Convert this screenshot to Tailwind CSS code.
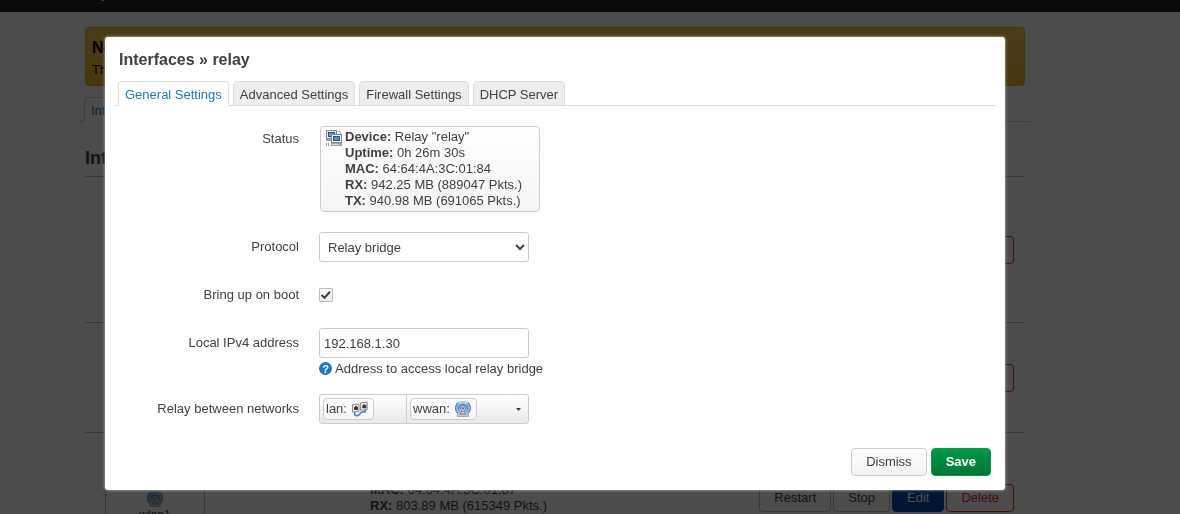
<!DOCTYPE html>
<html lang="en">

<head>
  <meta charset="UTF-8" />
  <meta name="viewport" content="width=device-width, initial-scale=1.0" />
  <title>OpenWrt - Interfaces - LuCI</title>
  <script src="https://cdn.jsdelivr.net/npm/@tailwindcss/browser@4"></script>
</head>

<body class="h-screen overflow-hidden bg-white font-['Liberation_Sans',Arial,sans-serif] text-[13px] leading-4 text-[#404040]">

  <!-- Shared icons -->
  <svg class="hidden" aria-hidden="true">
    <symbol id="icon-wifi" viewBox="0 0 16 16">
      <circle cx="8" cy="7" r="7.500" fill="#b4cff0" />
      <g fill="none" stroke="#4a83c8" stroke-width="1.2">
        <path d="M3.400 12.600a7 7 0 0 1 0-11.200M12.600 12.600a7 7 0 0 0 0-11.200" />
        <path d="M4.600 10.600a5 5 0 0 1 0-7.200M11.400 10.600a5 5 0 0 0 0-7.200" />
        <path d="M5.800 8.400a3 3 0 1 1 4.400 0" />
      </g>
      <path d="M8 6L5 14h6z" fill="#e8eef5" stroke="#6d7680" stroke-width=".9" />
      <path d="M6.500 10.500h3M6 12.300h4" stroke="#6d7680" stroke-width=".8" />
      <circle cx="8" cy="5.800" r="1.300" fill="#fff" stroke="#556" stroke-width=".8" />
      <path d="M2.500 13.800h11v1.700h-11z" fill="#ddd" stroke="#8a8a8a" stroke-width=".7" />
    </symbol>
  </svg>

  <!-- Page -->
  <header class="flex h-3 items-end bg-[#222] pr-[70px]">
    <div class="mx-auto h-full w-full max-w-[940px] overflow-hidden">
      <a href="#" class="-mt-5 block text-[20px] leading-5 text-white">OpenWrt</a>
    </div>
  </header>

  <main class="pt-[15px] pr-[70px]">
    <div class="mx-auto max-w-[940px]">
      <div class="h-[59px] rounded border border-[#e0b000] bg-linear-to-b from-[#f6cd50] to-[#eab72d] px-[6px] pt-[9px] text-black">
        <h4 class="text-base leading-[22px] font-bold">No password set!</h4>
        <p class="leading-[22px]">There is no password set on this router. Please configure a root password to protect the web interface.</p>
      </div>

      <ul class="-mx-[5px] mt-[11px] flex gap-1 border-b border-[#ccc] pl-1">
        <li class="-mb-px rounded-t border border-[#ccc] border-b-white bg-white px-[6px] pt-[5px] pb-[2px]"><a href="#" class="text-[#1976d2]">Interfaces</a></li>
        <li class="-mb-px rounded-t border border-[#ccc] bg-[#eee] px-[6px] pt-[5px] pb-[2px]"><a href="#">Global network options</a></li>
      </ul>

      <h3 class="mt-[26px] text-lg leading-5 font-bold">Interfaces</h3>

      <div class="mt-2 border-t border-[#bbb]">
        <div class="flex h-[146px] items-center justify-end border-b border-[#bbb] pr-[11px]">
          <button class="h-7 rounded border border-[#e5320a] px-[14px] text-[#e5320a]">Delete</button>
        </div>
        <div class="flex h-[110px] items-center justify-end border-b border-[#bbb] pr-[11px]">
          <button class="h-7 rounded border border-[#e5320a] px-[14px] text-[#e5320a]">Delete</button>
        </div>
        <div class="flex h-[130px] items-center border-b border-[#bbb] pr-[11px] pl-5">
          <div class="w-[100px] border border-[#bbb] pb-1 text-center">
            <div class="border-b border-[#bbb] py-px font-bold">wwan</div>
            <svg class="mx-auto mt-1 size-4"><use href="#icon-wifi" /></svg>
            <small class="text-xs">wlan1</small>
          </div>
          <div class="ml-[165px]">
            <div><strong>Protocol:</strong> DHCP client</div>
            <div><strong>Uptime:</strong> 0h 26m 32s</div>
            <div><strong>MAC:</strong> 64:64:4A:3C:01:87</div>
            <div><strong>RX:</strong> 803.89 MB (615349 Pkts.)</div>
            <div><strong>TX:</strong> 137.91 MB (273698 Pkts.)</div>
            <div><strong>IPv4:</strong> 192.168.1.30/24</div>
          </div>
          <div class="ml-auto flex gap-[2px]">
            <button class="h-7 rounded border border-[#bbb] px-[14px]">Restart</button>
            <button class="h-7 rounded border border-[#bbb] px-[14px]">Stop</button>
            <button class="h-7 rounded border border-[#0050b8] bg-linear-to-b from-[#0050b8] to-[#0040a0] px-[14px] text-white">Edit</button>
            <button class="h-7 rounded border border-[#e5320a] px-[14px] text-[#e5320a]">Delete</button>
          </div>
        </div>
      </div>
    </div>
  </main>

  <!-- Modal -->
  <div class="fixed inset-0 overflow-auto bg-black/70 pt-[37px] pr-[70px]">
    <div role="dialog" aria-labelledby="modal-title" class="mx-auto max-w-[900px] rounded-[3px] bg-white px-[9px] pt-[13px] pb-[14px] shadow-[0_0_3px_#ccc]">
      <h4 id="modal-title" class="px-[5px] text-base leading-5 font-bold">Interfaces » relay</h4>

      <ul class="mt-[11px] flex gap-1 border-b border-[#ddd] pl-1">
        <li class="-mb-px rounded-t border border-[#ddd] border-b-white bg-white px-[6px] pt-[5px] pb-[2px]"><a href="#" class="text-[#1976d2]">General Settings</a></li>
        <li class="-mb-px rounded-t border border-[#ddd] bg-[#eee] px-[6px] pt-[5px] pb-[2px]"><a href="#">Advanced Settings</a></li>
        <li class="-mb-px rounded-t border border-[#ddd] bg-[#eee] px-[6px] pt-[5px] pb-[2px]"><a href="#">Firewall Settings</a></li>
        <li class="-mb-px rounded-t border border-[#ddd] bg-[#eee] px-[6px] pt-[5px] pb-[2px]"><a href="#">DHCP Server</a></li>
      </ul>

      <form class="mt-5 space-y-[18px] px-[5px]">
        <div class="flex gap-5 pb-[2px]">
          <div class="w-[180px] pt-[5px] text-right">Status</div>
          <div class="ml-px flex h-[86px] w-[220px] gap-[3px] rounded border border-[#ccc] bg-linear-to-b from-white to-[#f5f5f5] px-[5px] pt-[2px]">
            <svg class="mt-px size-4 shrink-0" viewBox="0 0 16 16">
              <path d="M0 0h11v9H0z" fill="#8c8c88" />
              <path d="M1 1h9v7H1z" fill="#f2f2ee" />
              <path d="M2 2h7v5H2z" fill="#1f4f9f" />
              <path d="M3 3h5v3H3z" fill="#6f9bd8" />
              <path d="M0 9h6v2H0z" fill="#a4a49c" />
              <path d="M12 1h2v1h-2zM14 2h1v2h-1z" fill="#7ba6e0" />
              <path d="M5 4h11v9H5z" fill="#84847e" />
              <path d="M6 5h9v7H6z" fill="#f6f6f2" />
              <path d="M7 6h7v5H7z" fill="#1f4f9f" />
              <path d="M8 7h5v3H8z" fill="#5c8cd0" />
              <path d="M5 13h11v3H5z" fill="#a4a49c" />
              <path d="M6 14h7v1H6z" fill="#dcdcd4" />
              <path d="M0 13h1v3H0zM2 13h1v3H2z" fill="#7ba6e0" />
            </svg>
            <div>
              <div><strong>Device:</strong> Relay "relay"</div>
              <div><strong>Uptime:</strong> 0h 26m 30s</div>
              <div><strong>MAC:</strong> 64:64:4A:3C:01:84</div>
              <div><strong>RX:</strong> 942.25 MB (889047 Pkts.)</div>
              <div><strong>TX:</strong> 940.98 MB (691065 Pkts.)</div>
            </div>
          </div>
        </div>

        <div class="flex gap-5">
          <label for="proto" class="w-[180px] pt-[7px] text-right">Protocol</label>
          <select id="proto" class="h-[30px] w-[210px] rounded-[3px] border border-[#ccc] bg-white px-1">
            <option>Relay bridge</option>
          </select>
        </div>

        <div class="flex h-[30px] items-center gap-5">
          <label for="auto" class="w-[180px] text-right">Bring up on boot</label>
          <span class="grid size-[14px]">
            <input id="auto" type="checkbox" checked class="peer col-start-1 row-start-1 size-[14px] appearance-none rounded-[1px] border border-[#bbb] bg-linear-to-b from-white to-[#eee]" />
            <svg class="pointer-events-none invisible col-start-1 row-start-1 size-[14px] peer-checked:visible" viewBox="0 0 14 14" fill="none" stroke="#404040" stroke-width="2"><path d="M2.500 7l3 2.800 5.500-6" /></svg>
          </span>
        </div>

        <div class="flex gap-5">
          <label for="ipaddr" class="w-[180px] pt-[7px] text-right">Local IPv4 address</label>
          <div>
            <input id="ipaddr" type="text" value="192.168.1.30" class="block h-[30px] w-[210px] rounded-[3px] border border-[#ccc] px-1" />
            <div class="flex h-[18px] items-center gap-[3px] pt-[3px]">
              <span class="flex size-[13px] items-center justify-center rounded-full bg-[#1976d2] text-[11px] leading-3 font-bold text-white">?</span>
              Address to access local relay bridge
            </div>
          </div>
        </div>

        <div class="flex gap-5">
          <label for="networks" class="w-[180px] pt-[7px] text-right">Relay between networks</label>
          <button id="networks" type="button" class="flex h-[30px] w-[210px] items-stretch rounded-[3px] border border-[#ccc] bg-linear-to-b from-white to-[#e9e9e9] text-left">
            <span class="flex w-[87px] items-center border-r border-[#ccc] px-[3px]">
              <span class="flex h-[22px] items-center gap-[5px] rounded border border-[#ccc] bg-linear-to-b from-white to-[#f5f5f5] pr-[5px] pl-[2px]">lan:
                <svg class="size-4" viewBox="0 0 16 16">
                  <path d="M3 11c-1.500 2.500.5 4.500 3 3.500s2-3.500 4-3.500 4 .5 3.500-2.500" fill="none" stroke="#3d7cc9" stroke-width="1.600" />
                  <path d="M.5 3.700l6.500-.7v7.500l-6.500.6z" fill="#f0f0ea" stroke="#8a8a84" />
                  <path d="M8.500 2l6.700-.8v7.300l-6.700.8z" fill="#f0f0ea" stroke="#8a8a84" />
                  <path d="M2 6h1V5h2v1h1v3H2zM10.300 4.200h1v-1h2v1h1v3h-4z" fill="#3c3c3c" />
                </svg>
              </span>
            </span>
            <span class="flex flex-1 items-center px-[3px]">
              <span class="flex h-[22px] items-center gap-[5px] rounded border border-[#ccc] bg-linear-to-b from-white to-[#f5f5f5] pr-[5px] pl-[2px]">wwan:
                <svg class="size-4"><use href="#icon-wifi" /></svg>
              </span>
            </span>
            <span class="flex w-5 items-center justify-center">
              <svg class="h-[3px] w-[5px]" viewBox="0 0 5 3"><path d="M0 0h5L2.500 3z" fill="#404040" /></svg>
            </span>
          </button>
        </div>
      </form>

      <div class="mt-6 flex justify-end gap-1 px-[5px]">
        <button type="button" class="h-7 rounded border border-[#ccc] bg-linear-to-b from-white to-[#f2f2f2] px-[14px]">Dismiss</button>
        <button type="button" class="h-7 rounded border border-[#00a04a] bg-linear-to-b from-[#009a48] to-[#007535] px-[14px] font-bold text-white">Save</button>
      </div>
    </div>
  </div>
</body>

</html>
